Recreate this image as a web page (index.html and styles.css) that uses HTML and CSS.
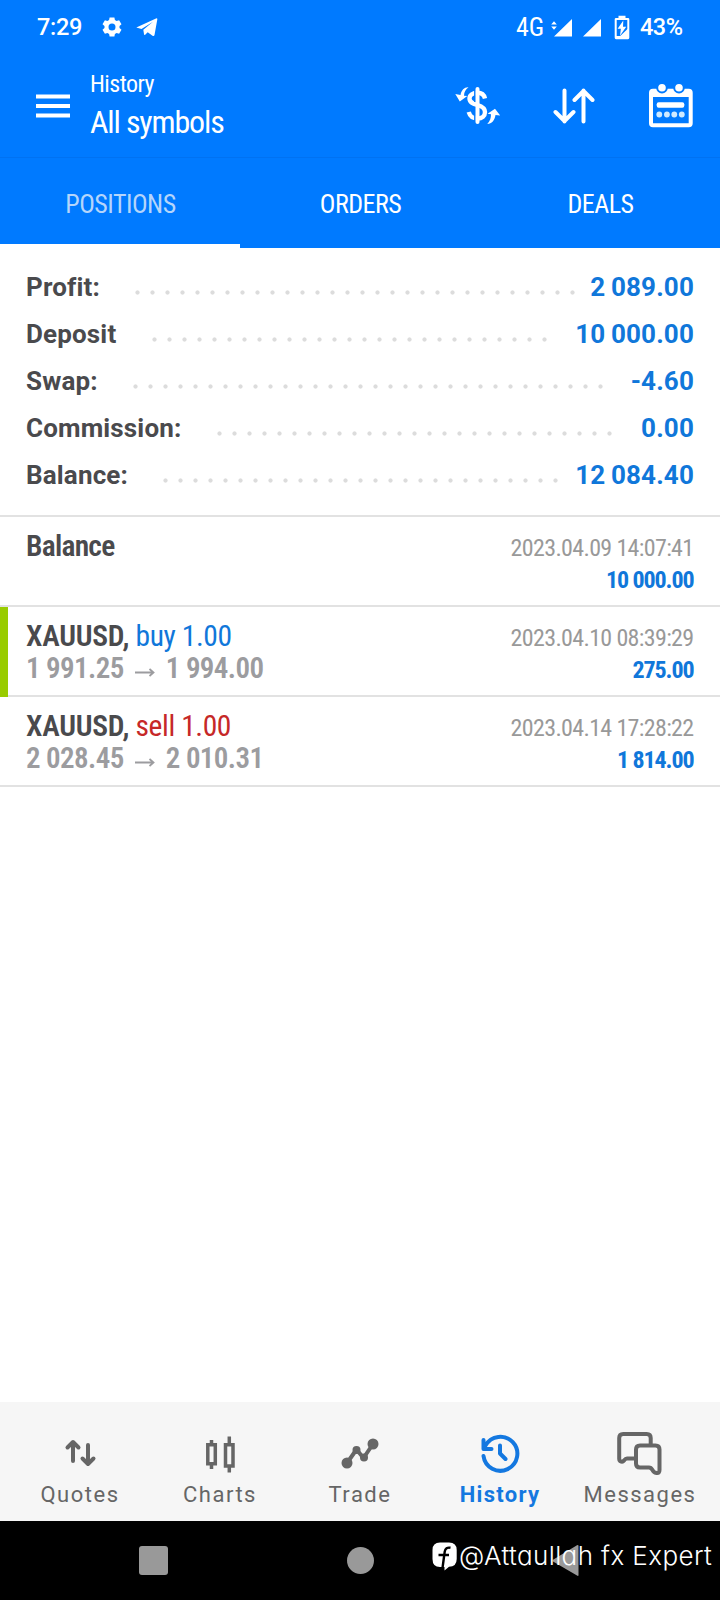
FILE: index.html
```html
<!DOCTYPE html>
<html lang="en">
<head>
<meta charset="utf-8">
<title>History</title>
<link rel="stylesheet" href="styles.css">
</head>
<body>
<div class="screen">
  <header class="header">
    <div class="status">
      <span class="clock">7:29</span>
      <svg class="gear" width="20" height="20" viewBox="0 0 20 20"><path fill="#fff" fill-rule="evenodd" d="M7.6 0.5h4.8l.5 2.6 1.7 1 2.5-.9 2.4 4.1-2 1.7v2l2 1.7-2.4 4.1-2.5-.9-1.7 1-.5 2.6H7.600l-.5-2.600-1.700-1-2.500.9-2.400-4.100 2-1.700v-2l-2-1.700 2.400-4.100 2.500.9 1.700-1zM10 6.500a3.500 3.500 0 1 0 0 7 3.500 3.500 0 0 0 0-7z"/></svg>
      <svg class="plane" width="22" height="19" viewBox="0 0 22 19"><path fill="#fff" d="M0.300 9.400 20 .4q1.500-.5 1.300 1L18.500 17q-.4 1.600-2 .7l-4.800-3.500-2.500 2.600q-1 .8-1.200-.8l-.7-4.200L17 3.700 5.500 11z"/></svg>
      <span class="network">4G</span>
      <svg class="signals" width="50" height="19" viewBox="0 0 50 19"><path fill="#fff" d="M3 18.500 21 1v17.500zM32 18.500 50 1v17.500zM.2 6.500 3 3.200l2.800 3.300zM.2 8.500 3 11.800l2.800-3.300z"/></svg>
      <svg class="battery" width="16" height="25" viewBox="0 0 16 25"><path fill="#fff" fill-rule="evenodd" d="M4.500 3V.7h7V3H14q1.300 0 1.300 1.300v18.500q0 1.400-1.300 1.400H2q-1.300 0-1.300-1.400V4.300Q.7 3 2 3zM2.700 5v16h3.500L12.500 15 13.300 14V5z"/><path fill="#fff" d="M9.300 5.500 3.600 13.700h3.300L6 20.700l6.200-9H9z"/></svg>
      <span class="percent">43%</span>
    </div>
    <div class="toolbar">
      <svg class="menu" width="34" height="24" viewBox="0 0 34 24"><path stroke="#fff" stroke-width="4" d="M0 2.500h34M0 12h34M0 21.500h34"/></svg>
      <div class="titles">
        <span class="title-small">History</span>
        <span class="title-large">All symbols</span>
      </div>
      <svg class="dollar" width="46" height="40" viewBox="0 0 46 40" fill="none" stroke="#fff"><path stroke-width="4.400" d="M30 12.500C29 8.500 26 6.800 22.500 6.800c-4.500 0-8 2-8 5.700 0 4 4 5.300 8 6.500s7.500 2.700 7.500 7c0 4-3 6.500-7.500 6.500-4.500 0-7.500-2-8.800-6.500"/><path stroke="#007aff" stroke-width="1.800" d="M20 3v13M20 22v14"/><path stroke-width="4" stroke-linecap="round" d="M22.500 3v33"/><path fill="#fff" stroke="none" d="M13.500 1.300C9.500 1 6.500 4 5.500 9L.3 8l4.500 7.500L12.300 10l-3.300-.3C9.200 6 10.500 3.500 13.500 1.300zM32.300 38c4.500 0 7.500-4 8.200-9l4.700.5L40 22.700l-7.500 5 3.500.6c0 4-1 7-3.700 9.700z"/></svg>
      <svg class="sort" width="42" height="36" viewBox="0 0 42 36" fill="none" stroke="#fff" stroke-width="4" stroke-linecap="round" stroke-linejoin="round"><path d="M11.500 2.500v31M2.500 24l9 9 9-9M30.500 33.500v-31M21.500 12l9-9 9 9"/></svg>
      <svg class="calendar" width="44" height="46" viewBox="0 0 44 46"><rect x="2" y="7.800" width="39.700" height="34.400" rx="2" fill="none" stroke="#fff" stroke-width="4"/><path fill="#fff" d="M2 7h40v7H2z"/><g fill="#fff" stroke="#007aff" stroke-width="2"><circle cx="13" cy="4.700" r="4.800"/><circle cx="30" cy="4.700" r="4.800"/></g><rect x="7.700" y="19.200" width="27.600" height="5.600" rx="2" fill="#fff"/><g fill="#cfeaff"><circle cx="10.300" cy="31.500" r="2.900"/><circle cx="17.900" cy="31.500" r="2.900"/><circle cx="25.300" cy="31.500" r="2.900"/><circle cx="32.800" cy="31.500" r="2.900"/></g></svg>
    </div>
    <nav class="tabs">
      <span class="tab tab-active">POSITIONS</span>
      <span class="tab">ORDERS</span>
      <span class="tab">DEALS</span>
    </nav>
  </header>

  <section class="summary">
    <div class="sum-row"><span class="label">Profit:</span><i class="dots" style="--start:135px;--count:30"></i><span class="value">2 089.00</span></div>
    <div class="sum-row"><span class="label">Deposit</span><i class="dots" style="--start:152px;--count:27"></i><span class="value">10 000.00</span></div>
    <div class="sum-row"><span class="label">Swap:</span><i class="dots" style="--start:133px;--count:32"></i><span class="value">-4.60</span></div>
    <div class="sum-row"><span class="label">Commission:</span><i class="dots" style="--start:217px;--count:27"></i><span class="value">0.00</span></div>
    <div class="sum-row"><span class="label">Balance:</span><i class="dots" style="--start:163px;--count:27"></i><span class="value">12 084.40</span></div>
  </section>

  <main class="deals">
    <article class="deal">
      <div class="deal-main"><div class="deal-name"><b class="operation">Balance</b></div></div>
      <div class="deal-side"><div class="date">2023.04.09 14:07:41</div><div class="amount">10 000.00</div></div>
    </article>
    <article class="deal deal-marked">
      <div class="deal-main"><div class="deal-name"><b>XAUUSD,</b> <span class="buy">buy 1.00</span></div><div class="prices">1 991.25 <svg class="arrow" width="20" height="12" viewBox="0 0 20 12"><path d="M0 6.500h18M14.500 3 18.500 6.500l-4 3.500" fill="none" stroke="#9c9c9f" stroke-width="1.800"/></svg> 1 994.00</div></div>
      <div class="deal-side"><div class="date">2023.04.10 08:39:29</div><div class="amount">275.00</div></div>
    </article>
    <article class="deal">
      <div class="deal-main"><div class="deal-name"><b>XAUUSD,</b> <span class="sell">sell 1.00</span></div><div class="prices">2 028.45 <svg class="arrow" width="20" height="12" viewBox="0 0 20 12"><path d="M0 6.500h18M14.500 3 18.500 6.500l-4 3.500" fill="none" stroke="#9c9c9f" stroke-width="1.800"/></svg> 2 010.31</div></div>
      <div class="deal-side"><div class="date">2023.04.14 17:28:22</div><div class="amount">1 814.00</div></div>
    </article>
  </main>

  <nav class="bottom">
    <div class="item"><svg width="46" height="46" viewBox="0 0 46 46" fill="none" stroke="#666" stroke-width="4" stroke-linecap="round" stroke-linejoin="round"><path d="M16 30V12M10.500 16.500 16 11l5.500 5.500M31 14v18M25.500 27.500 31 33l5.500-5.500"/></svg><span>Quotes</span></div>
    <div class="item"><svg width="46" height="46" viewBox="0 0 46 46" fill="none" stroke="#666" stroke-width="3.500"><path d="M10.800 13.800h7.500v19h-7.500zM28.500 13.800h7.500V35h-7.500zM14.500 9v4M14.500 34v4M32.300 5.500v7M32.300 36v5.500"/></svg><span>Charts</span></div>
    <div class="item"><svg width="46" height="46" viewBox="0 0 46 46" fill="none" stroke="#666" stroke-width="4" stroke-linejoin="round"><path d="M10 32 19.500 18.500 26.500 27 36 13"/><g fill="#666" stroke="none"><circle cx="10" cy="32" r="5.500"/><circle cx="36" cy="13" r="5.500"/><circle cx="19.500" cy="19" r="4"/><circle cx="27" cy="26.500" r="4"/></g></svg><span>Trade</span></div>
    <div class="item item-active"><svg width="46" height="46" viewBox="0 0 46 46" fill="none" stroke="#1478e0" stroke-width="4" stroke-linecap="round" stroke-linejoin="round"><path d="M6.500 25A17 17 0 1 0 8.500 14.500M6.500 9v9h8M23 14.500v8l5.500 5.500"/></svg><span>History</span></div>
    <div class="item"><svg width="46" height="46" viewBox="1 0 46 46" fill="none" stroke="#666" stroke-width="4" stroke-linejoin="round"><path d="M18.500 27.500H11q-1.500 0-3 2t-4 .5q-.8-.7-.8-2V7q0-4 4-4h23.500q4 0 4 4v6"/><path d="M24 14.500h15.500q4 0 4 4V39q0 3.500-3 3t-4-3q-1.500-2.500-3.500-2.500h-9q-4 0-4-4v-14q0-4 4-4z"/></svg><span>Messages</span></div>
  </nav>

  <footer class="system">
    <svg class="keys" width="720" height="79" viewBox="0 0 720 79" fill="#999"><rect x="139" y="25" width="29" height="29" rx="3"/><circle cx="360.500" cy="39.500" r="13.500"/><path d="M578.500 25v29q0 1.500-1.500.5L553 40.500q-1-1 0-1.800L577 24.300q1.500-.8 1.500.7z"/></svg>
    <div class="watermark">
      <svg width="25" height="29" viewBox="0 0 25 29"><path fill="#fff" d="M8 .5h9q7.700 0 7.700 7.500v9q0 7.700-7.700 7.700L12.500 28.500V25H8q-7.500 0-7.500-8V8Q.5.500 8 .5z"/><path fill="none" stroke="#000" stroke-width="2.400" d="M18.500 5.800q-5-1-5.800 4L10.500 26M6.500 13h10.500"/></svg>
      <span>@Attaullah fx Expert</span>
    </div>
  </footer>
</div>
</body>
</html>
```
FILE: styles.css
```css
* { box-sizing: border-box; }
body { margin: 0; background: #fff; font-family: Roboto, sans-serif; }
svg { display: block; flex: none; }
.screen { width: 720px; height: 1600px; display: flex; flex-direction: column; overflow: hidden; }

.header { background: #007aff; color: #fff; flex: none; }
.status { height: 54px; display: flex; align-items: center; padding-left: 37px; font-size: 23.500px; font-weight: 500; white-space: nowrap; }
.clock { width: 65px; letter-spacing: -.3px; }
.gear { margin-right: 14px; }
.network { margin-left: 358px; width: 35px; font-size: 26px; font-weight: 450; font-stretch: 75%; }
.signals { margin-right: 13px; }
.battery { margin-right: 10px; }
.percent { letter-spacing: -.5px; }

.toolbar { height: 104px; display: flex; align-items: center; padding: 0 27px 0 36px; border-bottom: 1px solid #0072f2; }
.titles { flex: 1; padding: 3px 0 0 20px; display: flex; flex-direction: column; font-stretch: 75%; white-space: nowrap; }
.title-small { font-size: 24px; line-height: 30px; letter-spacing: -.55px; }
.title-large { font-size: 32px; line-height: 46px; letter-spacing: -1.150px; }
.dollar { margin-right: 52px; }
.sort { margin-right: 54px; }

.tabs { height: 90px; display: grid; grid-template-columns: repeat(3, 1fr); font-size: 26px; font-stretch: 75%; letter-spacing: -.5px; }
.tab { display: flex; align-items: center; justify-content: center; padding: 1px 0 0 1px; }
.tab-active { color: #b5d5fb; border-bottom: 4px solid #fff; padding-top: 5px; }

.summary { padding: 15px 26px 17px; flex: none; }
.sum-row { height: 47px; display: grid; grid-template-columns: 1fr auto; align-items: center; font-size: 26px; font-weight: 700; position: relative; white-space: nowrap; }
.label { color: #4a4a4d; letter-spacing: .15px; }
.value { color: #1077da; letter-spacing: .15px; word-spacing: -1px; }
.dots { position: absolute; left: calc(var(--start) - 26px); top: 27px; height: 5px; width: calc(var(--count) * 15px); background: radial-gradient(circle at 2.500px 2.500px, #dcdcdc 1.700px, transparent 2.500px) 0 0 / 15px 5px repeat-x; }

.deals { border-top: 2px solid #e2e2e2; flex: 1; font-stretch: 75%; white-space: nowrap; }
.deal { height: 90px; display: flex; justify-content: space-between; padding: 13px 26px 0; border-bottom: 2px solid #e2e2e2; line-height: 32px; position: relative; }
.deal-marked::before { content: ""; position: absolute; left: 0; top: 0; width: 7.500px; height: 90px; background: #99cc00; }
.deal-name { font-size: 29.500px; color: #4a4a4d; letter-spacing: -.4px; }
.deal-name b { font-weight: 600; letter-spacing: -.25px; }
.deal-name .operation { letter-spacing: -.75px; }
.buy { color: #1077da; }
.sell { color: #c62828; }
.prices { font-size: 29px; font-weight: 600; color: #9c9c9f; letter-spacing: -.6px; }
.arrow { display: inline-block; margin: 0 5px; }
.deal-side { padding-top: 2px; text-align: right; font-size: 24px; }
.date { color: #999; letter-spacing: -.65px; margin-right: .5px; }
.amount { color: #1077da; font-weight: 700; letter-spacing: -1.100px; margin-right: .5px; }

.bottom { height: 119px; flex: none; background: #f6f6f6; display: grid; grid-template-columns: repeat(5, 1fr); padding: 29px 10px 0; }
.item { display: flex; flex-direction: column; align-items: center; font-size: 22px; line-height: 36px; letter-spacing: 1.500px; color: #666; }
.item-active { color: #1478e0; font-weight: 700; letter-spacing: 1.300px; }

.system { height: 79px; flex: none; background: #000; position: relative; }
.watermark { position: absolute; left: 432px; top: 20px; display: flex; color: #fff; font: 300 26px/30px Inter, sans-serif; font-feature-settings: "cv11"; letter-spacing: .4px; white-space: nowrap; }
.watermark svg { margin: 1px 2px 0 0; }
```
